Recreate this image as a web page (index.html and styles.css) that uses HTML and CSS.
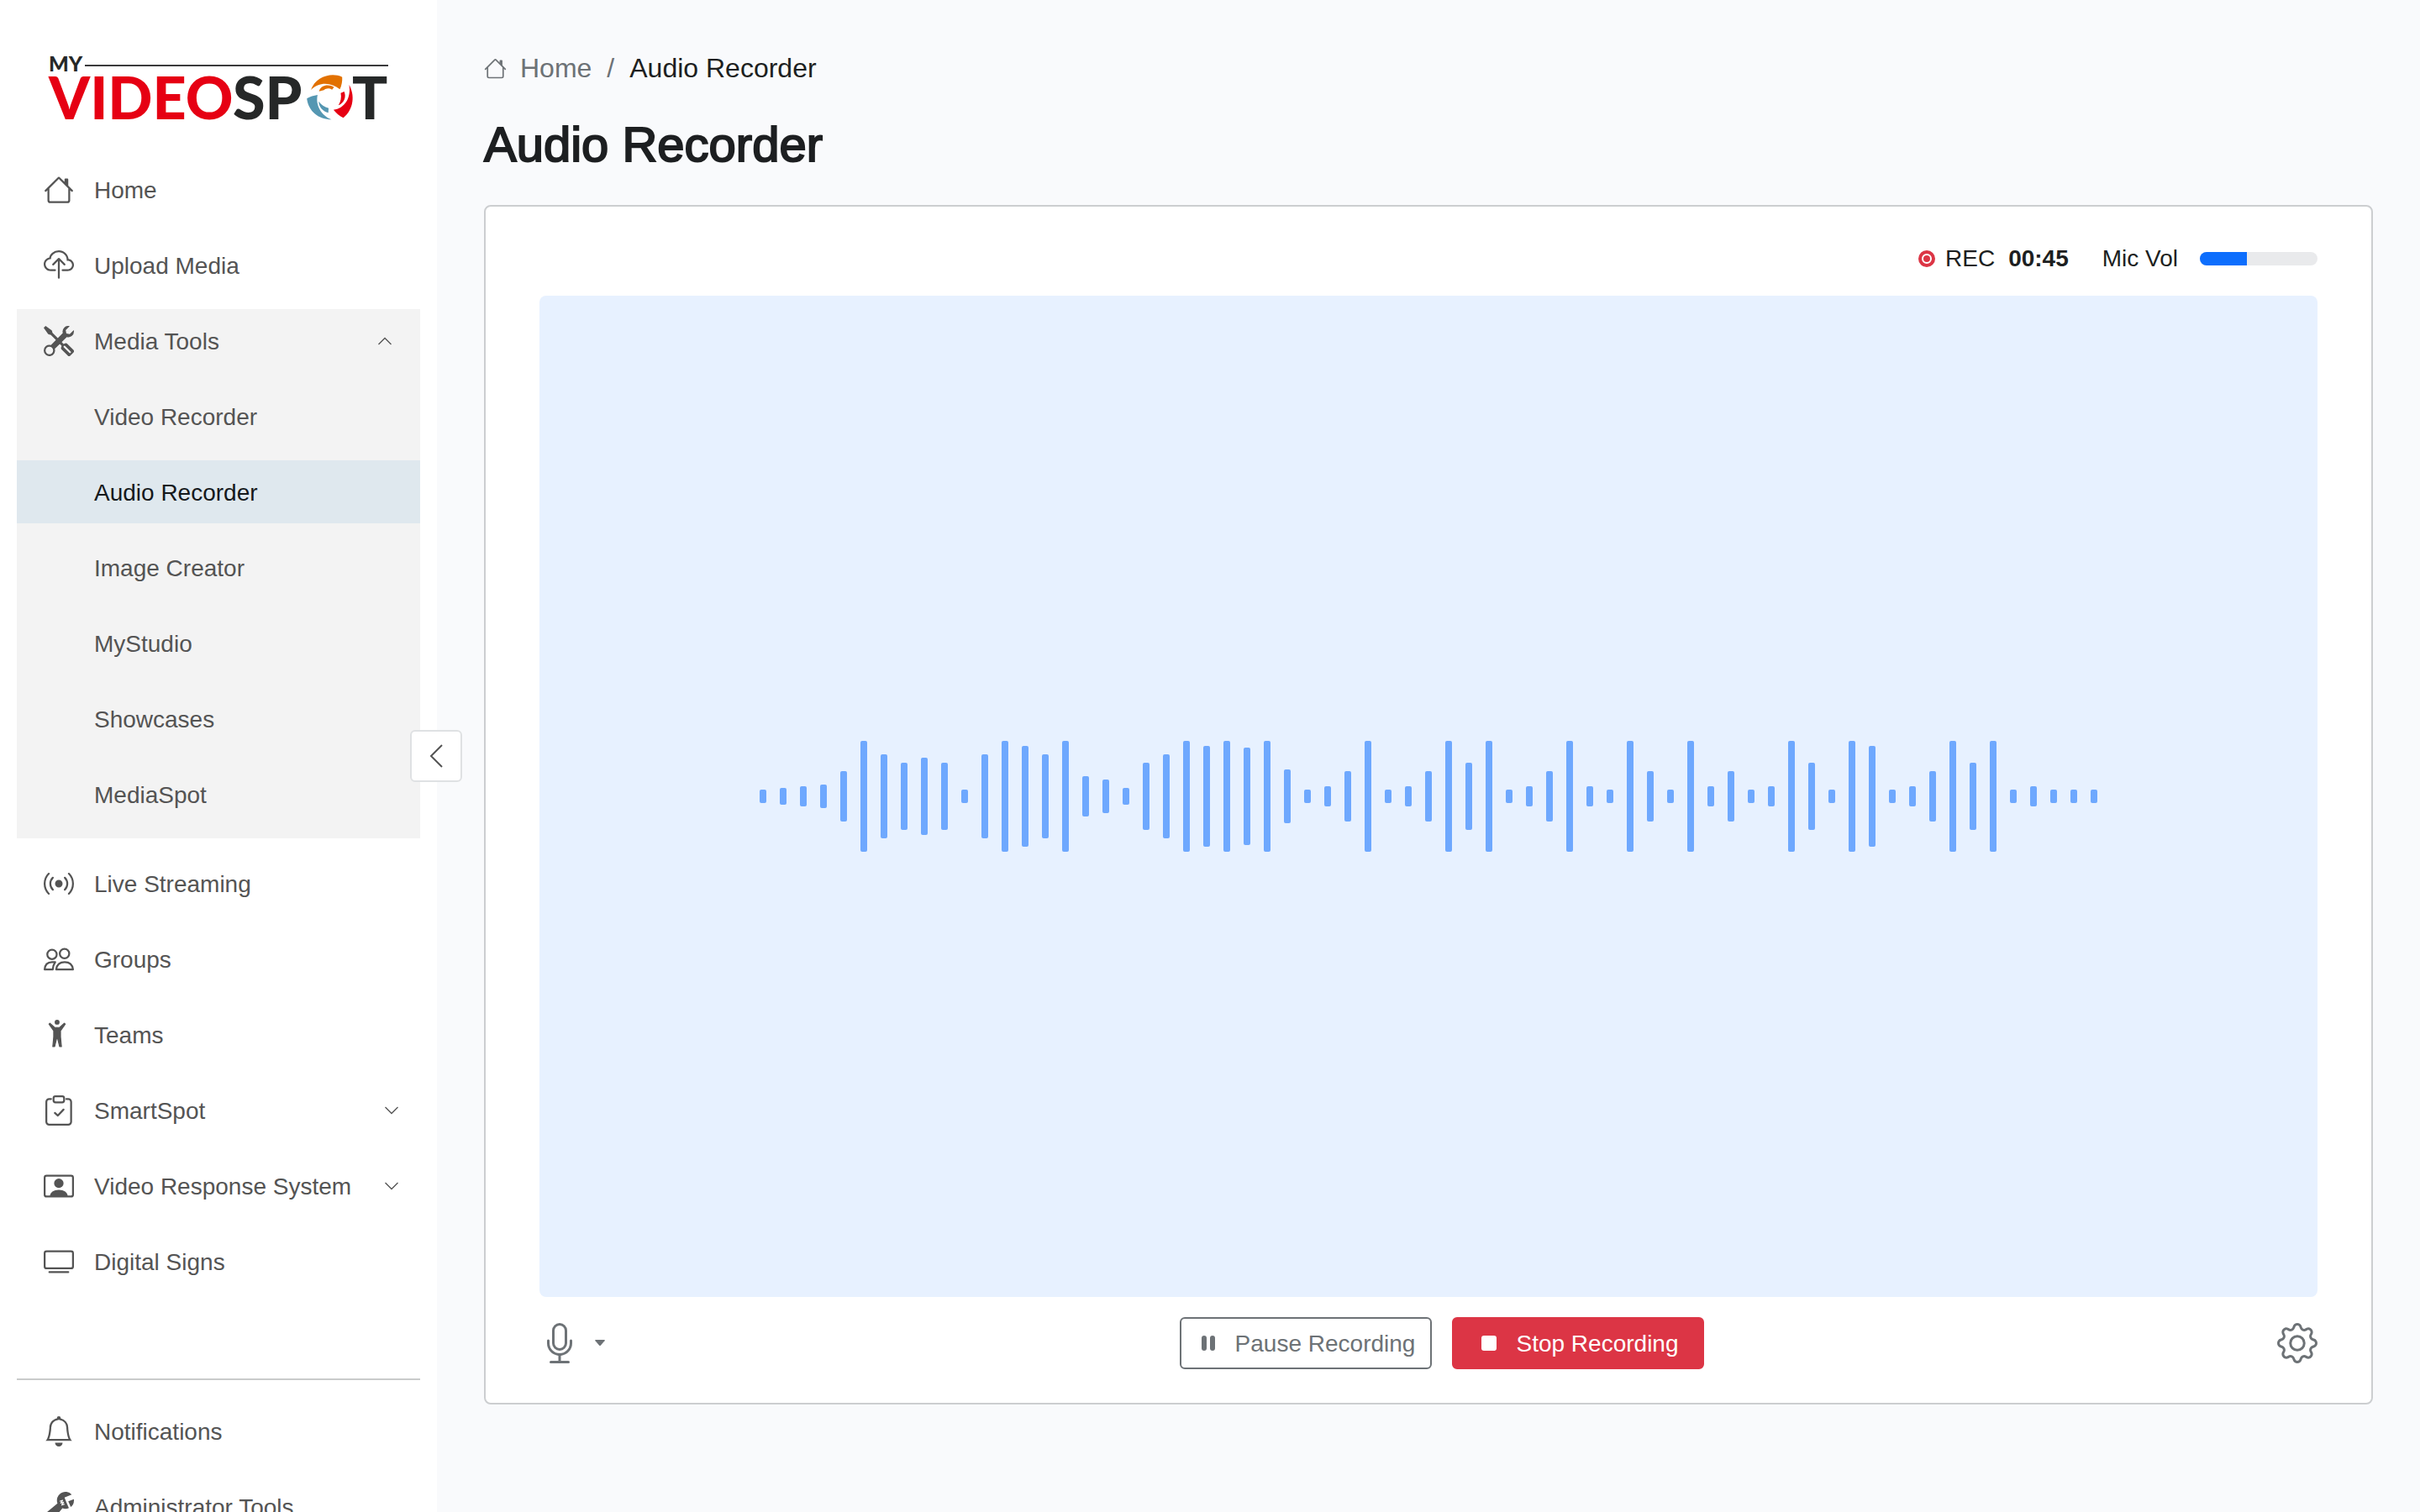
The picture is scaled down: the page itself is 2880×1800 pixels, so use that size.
FILE: index.html
```html
<!DOCTYPE html>
<html lang="en">
<head>
	<meta charset="UTF-8">
	<meta name="viewport" content="width=device-width, initial-scale=1.0">
	<title>Audio Recorder - MyVideoSpot</title>
	<link rel="stylesheet" href="styles.css">
</head>
<body>
	<aside class="sidebar">
		<div class="sidebar-inner">
			<a href="#" class="logo" aria-label="MyVideoSpot">
				<svg viewBox="0 0 404 78">
					<text class="logo-my" x="0" y="19">MY</text>
					<path d="M43 12h361" stroke="#3a3a3c" stroke-width="2"/>
					<text class="logo-red" x="0" y="76">VIDEO</text>
					<text class="logo-dark" x="219" y="76">SP</text>
					<text class="logo-dark" x="361" y="76">T</text>
					<!-- emblem -->
					<g transform="scale(.3444 .3333) translate(-168 -78)">
						<path fill="#e27100" d="M1074 201c12-34 44-53 76-53 12 0 22 2 32 7 1 15-2 31-8 44-30-25-70-29-100 2z"/>
						<path fill="#e27100" d="M1102 206c6-22 32-27 52-15l-7 9c-10-6-20-5-28 2z"/>
						<path fill="#5597b2" d="M1060 232c11-7 23-11 37-13-8 36 12 73 48 88-44 0-80-29-85-75z"/>
						<path fill="#5597b2" d="M1101 242c8 12 20 20 34 24l-1 17c-18-5-33-21-33-41z"/>
						<path fill="#e60013" d="M1206 183c20 36 17 87-20 118-13-7-25-17-34-29 38-4 62-42 54-89z"/>
						<path fill="#e60013" d="M1177 212l12-5c8 19 0 41-20 49 8-13 11-28 8-44z"/>
					</g>
				</svg>
			</a>

			<nav class="menu">
				<a href="#" class="item">
					<svg class="icon" viewBox="0 0 16 16"><path d="M8.707 1.5a1 1 0 0 0-1.414 0L.646 8.146a.5.5 0 0 0 .708.708L2 8.207V13.5A1.5 1.5 0 0 0 3.5 15h9a1.5 1.5 0 0 0 1.5-1.5V8.207l.646.647a.5.5 0 0 0 .708-.708L13 5.793V2.5a.5.5 0 0 0-.5-.5h-1a.5.5 0 0 0-.5.5v1.293zM13 7.207V13.5a.5.5 0 0 1-.5.5h-9a.5.5 0 0 1-.5-.5V7.207l5-5z"/></svg>
					<span>Home</span>
				</a>
				<a href="#" class="item">
					<svg class="icon" viewBox="0 0 16 16"><path d="M4.406 1.342A5.53 5.53 0 0 1 8 0c2.69 0 4.923 2 5.166 4.579C14.758 4.804 16 6.137 16 7.773 16 9.569 14.502 11 12.687 11H10a.5.5 0 0 1 0-1h2.688C13.979 10 15 8.988 15 7.773c0-1.216-1.02-2.228-2.313-2.228h-.5v-.5C12.188 2.825 10.328 1 8 1a4.53 4.53 0 0 0-2.941 1.1c-.757.652-1.153 1.438-1.153 2.055v.448l-.445.049C2.064 4.805 1 5.952 1 7.318 1 8.785 2.23 10 3.781 10H6a.5.5 0 0 1 0 1H3.781C1.708 11 0 9.366 0 7.318c0-1.763 1.266-3.223 2.942-3.593.143-.863.698-1.723 1.464-2.383"/><path d="M7.646 4.146a.5.5 0 0 1 .708 0l3 3a.5.5 0 0 1-.708.708L8.5 5.707V14.5a.5.5 0 0 1-1 0V5.707L5.354 7.854a.5.5 0 1 1-.708-.708z"/></svg>
					<span>Upload Media</span>
				</a>

				<div class="group">
					<button type="button" class="item" aria-expanded="true">
						<svg class="icon" viewBox="0 0 16 16"><path d="M1 0 0 1l2.2 3.081a1 1 0 0 0 .815.419h.07a1 1 0 0 1 .708.293l2.675 2.675-2.617 2.654A3.003 3.003 0 0 0 0 13a3 3 0 1 0 5.878-.851l2.654-2.617.968.968-.305.914a1 1 0 0 0 .242 1.023l3.27 3.27a.997.997 0 0 0 1.414 0l1.586-1.586a.997.997 0 0 0 0-1.414l-3.27-3.27a1 1 0 0 0-1.023-.242L10.5 9.5l-.96-.96 2.68-2.643A3.005 3.005 0 0 0 16 3q0-.405-.102-.777l-2.14 2.141L12 4l-.364-1.757L13.777.102a3 3 0 0 0-3.675 3.68L7.462 6.46 4.793 3.793a1 1 0 0 1-.293-.707v-.071a1 1 0 0 0-.419-.814zm9.646 10.646a.5.5 0 0 1 .708 0l2.914 2.915a.5.5 0 0 1-.707.707l-2.915-2.914a.5.5 0 0 1 0-.708M3 11a2 2 0 1 1 0 4 2 2 0 0 1 0-4"/></svg>
						<span>Media Tools</span>
						<svg class="chevron" viewBox="0 0 16 16"><path d="M.5 12 8 4.500 15.500 12"/></svg>
					</button>
					<a href="#" class="item sub">Video Recorder</a>
					<a href="#" class="item sub active">Audio Recorder</a>
					<a href="#" class="item sub">Image Creator</a>
					<a href="#" class="item sub">MyStudio</a>
					<a href="#" class="item sub">Showcases</a>
					<a href="#" class="item sub">MediaSpot</a>
				</div>

				<a href="#" class="item">
					<svg class="icon" viewBox="0 0 16 16"><path d="M3.05 3.05a7 7 0 0 0 0 9.9.5.5 0 0 1-.707.707 8 8 0 0 1 0-11.314.5.5 0 0 1 .707.707m2.122 2.122a4 4 0 0 0 0 5.656.5.5 0 1 1-.708.708 5 5 0 0 1 0-7.072.5.5 0 0 1 .708.708m5.656-.708a.5.5 0 0 1 .708 0 5 5 0 0 1 0 7.072.5.5 0 1 1-.708-.708 4 4 0 0 0 0-5.656.5.5 0 0 1 0-.708m2.122-2.12a.5.5 0 0 1 .707 0 8 8 0 0 1 0 11.313.5.5 0 0 1-.707-.707 7 7 0 0 0 0-9.9.5.5 0 0 1 0-.707zM10 8a2 2 0 1 1-4 0 2 2 0 0 1 4 0"/></svg>
					<span>Live Streaming</span>
				</a>
				<a href="#" class="item">
					<svg class="icon line" viewBox="0 0 16 16"><circle cx="4.400" cy="5.400" r="2.500"/><circle cx="11" cy="5" r="2.500"/><path d="M.5 13.400q.2-3.800 3.900-3.900h1.700q-1.200 1.600-1.300 3.900zM6.600 13.400q.5-3.900 4.500-3.900t4.400 3.900z"/></svg>
					<span>Groups</span>
				</a>
				<a href="#" class="item">
					<svg class="icon" viewBox="0 0 16 16"><circle cx="7.100" cy="1.300" r="1.300"/><path stroke="currentColor" stroke-width=".5" stroke-linejoin="round" d="M2.800 2.300l.5-.5 2.500 2.300h2.600l2.500-2.300.5.5-2.500 3.500V9l.5 5.200H8.400L7.400 10h-.6l-1 4.200H4.800L5.300 9V5.800z"/></svg>
					<span>Teams</span>
				</a>
				<button type="button" class="item">
					<svg class="icon line" viewBox="0 0 16 16"><path d="M3.900 1.900h-1a1.500 1.500 0 0 0-1.500 1.500V14a1.500 1.500 0 0 0 1.500 1.500H13a1.500 1.500 0 0 0 1.500-1.500V3.400A1.500 1.500 0 0 0 13 1.900h-1M5.900 9.300l1.600 1.400 3-3.200"/><rect x="5.200" y=".5" width="5.600" height="3.200" rx="1"/></svg>
					<span>SmartSpot</span>
					<svg class="chevron" viewBox="0 0 16 16"><path d="M.5 4 8 11.500 15.500 4"/></svg>
				</button>
				<button type="button" class="item">
					<svg class="icon" viewBox="0 0 16 16"><rect x=".5" y="2.500" width="15" height="11" rx="1" fill="none" stroke="currentColor"/><circle cx="8" cy="6.500" r="2.500"/><path d="M3.300 13.500c0-2.200 2-3.500 4.700-3.500s4.700 1.300 4.700 3.500z"/></svg>
					<span>Video Response System</span>
					<svg class="chevron" viewBox="0 0 16 16"><path d="M.5 4 8 11.500 15.500 4"/></svg>
				</button>
				<a href="#" class="item">
					<svg class="icon line" viewBox="0 0 16 16"><rect x=".5" y="2.500" width="15" height="9" rx="1"/><path d="M3 13.500h10"/></svg>
					<span>Digital Signs</span>
				</a>

				<hr class="divider">

				<a href="#" class="item">
					<svg class="icon" viewBox="0 0 16 16"><path d="M8 16a2 2 0 0 0 2-2H6a2 2 0 0 0 2 2M8 1.918l-.797.161A4 4 0 0 0 4 6c0 .628-.134 2.197-.459 3.742-.16.767-.376 1.566-.663 2.258h10.244c-.287-.692-.502-1.49-.663-2.258C12.134 8.197 12 6.628 12 6a4 4 0 0 0-3.203-3.92zM14.22 12c.223.447.481.801.78 1H1c.299-.199.557-.553.78-1C2.68 10.2 3 6.88 3 6c0-2.42 1.72-4.44 4.005-4.901a1 1 0 1 1 1.99 0A5 5 0 0 1 13 6c0 .88.32 4.2 1.22 6"/></svg>
					<span>Notifications</span>
				</a>
				<a href="#" class="item">
					<svg class="icon" viewBox="0 0 16 16"><path d="M16 4.5a4.5 4.5 0 0 1-1.703 3.526L13 5l2.959-1.11q.04.3.041.61"/><path d="M11.5 9c.653 0 1.273-.139 1.833-.39L12 5.5 11 3l3.826-1.53A4.5 4.5 0 0 0 7.29 6.092l-6.116 5.096a2.583 2.583 0 1 0 3.638 3.638L9.908 8.71A4.5 4.5 0 0 0 11.5 9m-1.292-4.361-.596.893.809-.27a.25.25 0 0 1 .287.377l-.596.893.809-.27.158.475-1.5.5a.25.25 0 0 1-.287-.376l.596-.893-.809.27a.25.25 0 0 1-.287-.377l.596-.893-.809.27-.158-.475 1.5-.5a.25.25 0 0 1 .287.376M3 14a1 1 0 1 1 0-2 1 1 0 0 1 0 2"/></svg>
					<span>Administrator Tools</span>
				</a>
			</nav>
		</div>
		<button type="button" class="collapse" aria-label="Collapse menu">
			<svg viewBox="0 0 16 28"><path d="M15 1L2 14l13 13"/></svg>
		</button>
	</aside>

	<main class="content">
		<nav class="breadcrumb" aria-label="Breadcrumb">
			<a href="#">
				<svg viewBox="0 0 16 16"><path d="M8.707 1.5a1 1 0 0 0-1.414 0L.646 8.146a.5.5 0 0 0 .708.708L2 8.207V13.5A1.5 1.5 0 0 0 3.5 15h9a1.5 1.5 0 0 0 1.5-1.5V8.207l.646.647a.5.5 0 0 0 .708-.708L13 5.793V2.5a.5.5 0 0 0-.5-.5h-1a.5.5 0 0 0-.5.5v1.293zM13 7.207V13.5a.5.5 0 0 1-.5.5h-9a.5.5 0 0 1-.5-.5V7.207l5-5z"/></svg>
				<span>Home</span>
			</a>
			<span class="slash">/</span>
			<span>Audio Recorder</span>
		</nav>
		<h1>Audio Recorder</h1>

		<section class="card">
			<div class="status">
				<svg class="rec-dot" viewBox="0 0 20 20"><circle cx="10" cy="10" r="10" fill="#dc3545"/><circle cx="10" cy="10" r="5" fill="#dc3545" stroke="#fff" stroke-width="2"/></svg>
				<span class="rec">REC</span>
				<b>00:45</b>
				<span class="mic-label" id="volLabel">Mic Vol</span>
				<div class="volume" role="progressbar" aria-labelledby="volLabel" aria-valuenow="40" aria-valuemin="0" aria-valuemax="100">
					<div class="volume-bar" style="width:40%"></div>
				</div>
			</div>

			<div class="wave" id="wave"></div>

			<div class="controls">
				<button type="button" class="icon-btn" aria-label="Choose microphone">
					<svg class="big" viewBox="0 0 16 16"><path d="M3.5 6.5A.5.5 0 0 1 4 7v1a4 4 0 0 0 8 0V7a.5.5 0 0 1 1 0v1a5 5 0 0 1-4.5 4.975V15h3a.5.5 0 0 1 0 1h-7a.5.5 0 0 1 0-1h3v-2.025A5 5 0 0 1 3 8V7a.5.5 0 0 1 .5-.5"/><path d="M10 8a2 2 0 1 1-4 0V3a2 2 0 1 1 4 0zM8 0a3 3 0 0 0-3 3v5a3 3 0 0 0 6 0V3a3 3 0 0 0-3-3"/></svg>
					<svg class="caret" viewBox="0 0 16 16"><path d="M3 4h10q1.500 0 .5 1.200l-4.500 5.300q-1 1-2 0L2.500 5.200Q1.500 4 3 4z"/></svg>
				</button>
				<div class="buttons">
					<button type="button" class="btn btn-outline">
						<svg viewBox="0 0 28 28"><rect x="6" y="4" width="6" height="18" rx="3"/><rect x="16" y="4" width="6" height="18" rx="3"/></svg>
						Pause Recording
					</button>
					<button type="button" class="btn btn-danger">
						<svg viewBox="0 0 28 28"><rect x="5" y="4" width="18" height="18" rx="3"/></svg>
						Stop Recording
					</button>
				</div>
				<button type="button" class="icon-btn" aria-label="Settings">
					<svg class="big" viewBox="0 0 16 16"><path d="M8 4.754a3.246 3.246 0 1 0 0 6.492 3.246 3.246 0 0 0 0-6.492M5.754 8a2.246 2.246 0 1 1 4.492 0 2.246 2.246 0 0 1-4.492 0"/><path d="M9.796 1.343c-.527-1.79-3.065-1.79-3.592 0l-.094.319a.873.873 0 0 1-1.255.52l-.292-.16c-1.64-.892-3.433.902-2.54 2.541l.159.292a.873.873 0 0 1-.52 1.255l-.319.094c-1.79.527-1.79 3.065 0 3.592l.319.094a.873.873 0 0 1 .52 1.255l-.16.292c-.892 1.64.901 3.434 2.541 2.54l.292-.159a.873.873 0 0 1 1.255.52l.094.319c.527 1.79 3.065 1.79 3.592 0l.094-.319a.873.873 0 0 1 1.255-.52l.292.16c1.64.893 3.434-.902 2.54-2.541l-.159-.292a.873.873 0 0 1 .52-1.255l.319-.094c1.79-.527 1.79-3.065 0-3.592l-.319-.094a.873.873 0 0 1-.52-1.255l.16-.292c.893-1.64-.902-3.433-2.541-2.54l-.292.159a.873.873 0 0 1-1.255-.52zm-2.633.283c.246-.835 1.428-.835 1.674 0l.094.319a1.873 1.873 0 0 0 2.693 1.115l.291-.16c.764-.415 1.6.42 1.184 1.185l-.159.292a1.873 1.873 0 0 0 1.116 2.692l.318.094c.835.246.835 1.428 0 1.674l-.319.094a1.873 1.873 0 0 0-1.115 2.693l.16.291c.415.764-.42 1.6-1.185 1.184l-.291-.159a1.873 1.873 0 0 0-2.693 1.116l-.094.318c-.246.835-1.428.835-1.674 0l-.094-.319a1.873 1.873 0 0 0-2.692-1.115l-.292.16c-.764.415-1.6-.42-1.184-1.185l.159-.291A1.873 1.873 0 0 0 1.945 8.93l-.319-.094c-.835-.246-.835-1.428 0-1.674l.319-.094A1.873 1.873 0 0 0 3.06 4.377l-.16-.292c-.415-.764.42-1.6 1.185-1.184l.292.159a1.873 1.873 0 0 0 2.692-1.115z"/></svg>
				</button>
			</div>
		</section>
	</main>

	<script>
		//bar heights of the recorded wave, left to right
		const levels = [
			16,20,24,28,60,132,100,80,92,80,16,100,132,120,100,132,48,40,20,80,100,132,
			120,132,116,132,64,16,24,60,132,16,24,60,132,80,132,16,24,60,132,24,16,132,
			60,16,132,24,60,16,24,132,80,16,132,120,16,24,60,132,80,132,16,24,16,16,16
		];
		const wave = document.getElementById("wave");
		levels.forEach(function(h){
			const bar = document.createElement("span");
			bar.className = "bar";
			bar.style.height = h + "px";
			wave.appendChild(bar);
		});
	</script>
</body>
</html>
```
FILE: styles.css
```css
:root{
	--text: #1d1f21;
	--menu: #545454;
	--gray: #6d7276;
	--red: #dc3545;
	--blue: #0d6efd;
}
*{
	box-sizing: border-box;
}
body{
	margin: 0;
	display: flex;
	height: 100vh;
	overflow: hidden;
	background: #f9fafc;
	color: var(--text);
	font-family: "Liberation Sans", Arial, sans-serif;
	font-size: 28px;
}
a{
	color: inherit;
	text-decoration: none;
}
button{
	font: inherit;
	color: inherit;
	background: none;
	border: 0;
	padding: 0;
	cursor: pointer;
}
svg{
	display: block;
	flex: none;
	fill: currentColor;
}

/* sidebar */
.sidebar{
	position: relative;
	flex: 0 0 520px;
	background: #fff;
}
.sidebar-inner{
	height: 100%;
	overflow: hidden;
	padding: 66px 20px 0;
}
.logo{
	display: block;
	margin: 0 38px 44px;
}
.logo svg{
	width: 100%;
	overflow: visible;
}
.logo text{
	font-family: Lato, sans-serif;
	font-weight: 900;
	font-size: 70px;
}
.logo .logo-my{
	font-size: 25px;
	fill: #262828;
}
.logo-red{
	fill: #e60013;
}
.logo-dark{
	fill: #262828;
}
.item{
	display: flex;
	align-items: center;
	gap: 24px;
	width: 100%;
	height: 75px;
	margin-bottom: 15px;
	padding: 0 26px 0 32px;
	color: var(--menu);
	text-align: left;
}
.item span{
	padding-top: 2px;
}
.sub{
	padding: 2px 26px 0 92px;
}
.active{
	background: #dfe8ee;
	color: #15191c;
}
.group{
	display: flow-root;
	margin-bottom: 16px;
	background: #f3f3f3;
}
.group button{
	padding-right: 34px;
}
.icon{
	width: 36px;
	height: 36px;
}
.line{
	fill: none;
	stroke: currentColor;
	stroke-linecap: round;
	stroke-linejoin: round;
}
.chevron{
	width: 16px;
	height: 16px;
	margin-left: auto;
	fill: none;
	stroke: currentColor;
	stroke-width: 1.3;
}
.divider{
	margin: 102px 0 23px;
	border: 0;
	border-top: 2px solid #c9cbcb;
}
.collapse{
	position: absolute;
	top: 50%;
	right: -30px;
	transform: translateY(-50%);
	display: grid;
	place-items: center;
	width: 62px;
	height: 62px;
	background: #fff;
	border: 2px solid #dfe1e3;
	border-radius: 6px;
	color: var(--menu);
}
.collapse svg{
	width: 16px;
	height: 28px;
	fill: none;
	stroke: currentColor;
	stroke-width: 2;
}

/* page */
.content{
	flex: 1;
	min-width: 0;
	padding: 57px 56px 0;
}
.breadcrumb{
	display: flex;
	gap: 18px;
	font-size: 32px;
	line-height: 48px;
}
.breadcrumb a{
	display: flex;
	align-items: center;
	gap: 16px;
	color: var(--gray);
}
.breadcrumb svg{
	width: 27px;
	height: 27px;
}
.slash{
	color: var(--gray);
}
h1{
	margin: 33px 0 38px;
	font-size: 58px;
	line-height: 68px;
	font-weight: 400;
	-webkit-text-stroke: 2px currentColor;
}
.card{
	padding: 42px 64px 40px;
	background: #fff;
	border: 2px solid #ccced0;
	border-radius: 8px;
}
.status{
	display: flex;
	justify-content: flex-end;
	align-items: center;
	height: 40px;
	margin-bottom: 24px;
}
.rec-dot{
	width: 20px;
	height: 20px;
	margin-right: 12px;
}
.rec{
	margin-right: 16px;
}
.mic-label{
	margin: 0 26px 0 40px;
}
.volume{
	width: 140px;
	height: 16px;
	border-radius: 8px;
	background: #e9eaec;
	overflow: hidden;
}
.volume-bar{
	height: 100%;
	background: var(--blue);
}
.wave{
	display: flex;
	justify-content: center;
	align-items: center;
	gap: 16px;
	aspect-ratio: 71 / 40;
	background: #e7f1ff;
	border-radius: 8px;
}
.bar{
	width: 8px;
	border-radius: 2px;
	background: #6ea8fe;
}
.controls{
	display: flex;
	justify-content: space-between;
	align-items: center;
	margin-top: 24px;
}
.icon-btn{
	display: flex;
	align-items: center;
	gap: 16px;
	color: var(--gray);
}
.big{
	width: 48px;
	height: 48px;
}
.caret{
	width: 16px;
	height: 16px;
}
.buttons{
	display: flex;
	gap: 24px;
}
.btn{
	display: flex;
	justify-content: center;
	align-items: center;
	gap: 18px;
	width: 300px;
	height: 62px;
	padding-top: 2px;
	border: 2px solid;
	border-radius: 6px;
}
.btn svg{
	width: 28px;
	height: 28px;
}
.btn-outline{
	color: var(--gray);
}
.btn-danger{
	background: var(--red);
	border-color: var(--red);
	color: #fff;
}
```
